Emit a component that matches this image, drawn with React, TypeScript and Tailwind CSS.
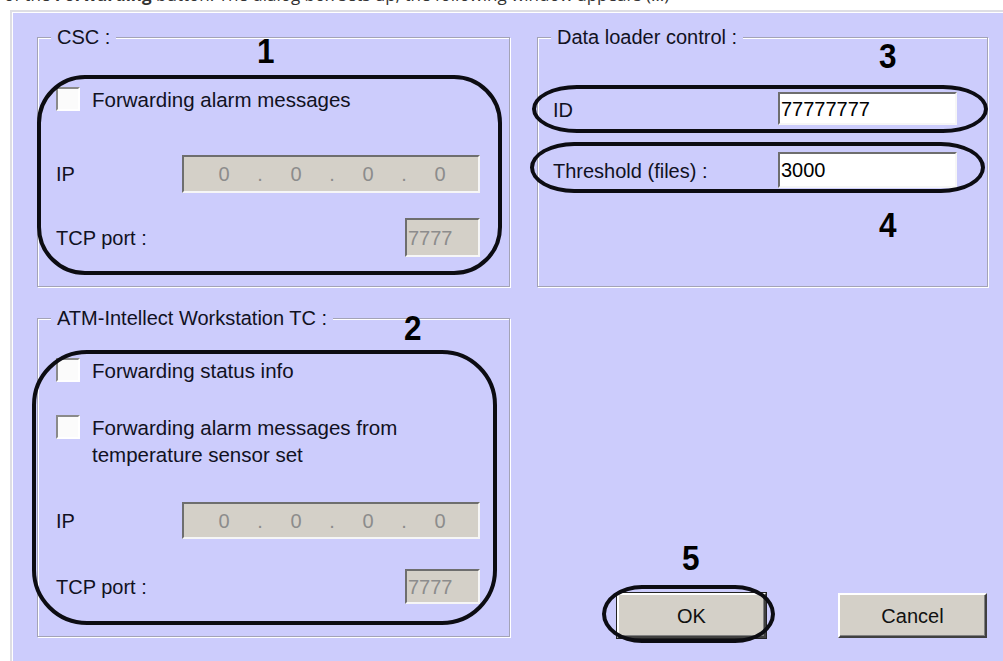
import React from 'react';

function GroupBox({
  title,
  className = '',
  children,
}: {
  title: string;
  className?: string;
  children?: React.ReactNode;
}) {
  return (
    <fieldset
      className={`min-w-0 border border-[#a3a3b6] shadow-[inset_1px_1px_0_#ffffff,1px_1px_0_#ffffff] ${className}`}
    >
      <legend className="ml-[13px] px-[6px] bg-[#ccccfc] text-[20px] leading-[20px]">
        {title}
      </legend>
      {children}
    </fieldset>
  );
}

function Checkbox({ label }: { label: React.ReactNode }) {
  return (
    <label className="flex items-start gap-[12px]">
      <span className="block size-[24px] shrink-0 bg-[#fbfbfb] border-2 border-t-[#8a8a8a] border-l-[#8a8a8a] border-b-white border-r-white" />
      <span className="text-[20.5px] leading-[27px] -mt-[1px]">{label}</span>
    </label>
  );
}

const sunken =
  'border-2 border-t-[#6e6e6e] border-l-[#6e6e6e] border-b-[#f6f6f6] border-r-[#f6f6f6]';

function IpField() {
  const parts = ['0', '0', '0', '0'];
  return (
    <div
      className={`w-[298px] h-full flex items-center bg-[#d4d0c8] pl-[10px] text-[20px] text-[#8c8c8c] ${sunken}`}
    >
      {parts.map((p, i) => (
        <React.Fragment key={i}>
          <span className="w-[60px] text-center">{p}</span>
          {i < 3 && <span className="w-[12px] text-center">.</span>}
        </React.Fragment>
      ))}
    </div>
  );
}

function PortField() {
  return (
    <div
      className={`w-[75px] h-full flex items-center bg-[#d4d0c8] pl-[1px] text-[20px] text-[#8c8c8c] ${sunken}`}
    >
      7777
    </div>
  );
}

function TextField({ value }: { value: string }) {
  return (
    <div
      className={`w-[179px] h-full flex items-center bg-white pl-[1px] text-[20px] text-black ${sunken}`}
    >
      {value}
    </div>
  );
}

function Button({ label, isDefault }: { label: string; isDefault?: boolean }) {
  return (
    <button
      className={`w-[149px] h-[45px] bg-[#d4d0c8] text-[20px] text-[#111] border-2 border-t-white border-l-white border-b-[#404040] border-r-[#404040] shadow-[inset_-1px_-1px_0_#808080] ${
        isDefault ? 'outline outline-1 outline-[#222]' : ''
      }`}
    >
      {label}
    </button>
  );
}

export default function App() {
  return (
    <div className="w-[1003px] h-[661px] overflow-hidden bg-white flex flex-col font-['Liberation_Sans',Arial,sans-serif] text-[#111122]">
      {/* cut-off line of the surrounding document */}
      <div className="h-[10px] shrink-0 overflow-hidden">
        <p className="-mt-[15px] pl-[4px] text-[17px] leading-[20px] text-[#333] whitespace-nowrap font-['Open_Sans',sans-serif]">
          of the <b>Forwarding</b> button. The dialog box sets up, the following window appears (…)
        </p>
      </div>

      <div className="relative flex-1 ml-[10px] bg-[#ccccfc] border-t-2 border-l-2 border-[#dedee4] shadow-[inset_1px_1px_0_#ffffff] pl-[25px] pt-[15px] pr-[15px] pb-[23px]">
        <div className="h-full grid grid-cols-[473px_451px] grid-rows-[auto_1fr] gap-x-[27px] gap-y-[21px]">
          <GroupBox title="CSC :">
            <div className="flex flex-col pl-[18px] pr-[29px] pb-[29px]">
              <div className="mt-[40px] h-[24px]">
                <Checkbox label="Forwarding alarm messages" />
              </div>
              <div className="mt-[44px] h-[38px] flex items-center justify-between">
                <span className="text-[20px]">IP</span>
                <IpField />
              </div>
              <div className="mt-[25px] h-[39px] flex items-center justify-between">
                <span className="text-[20px]">TCP port :</span>
                <PortField />
              </div>
            </div>
          </GroupBox>

          <GroupBox title="Data loader control :">
            <div className="flex flex-col pl-[15px] pr-[30px]">
              <div className="mt-[45px] h-[33px] flex items-center justify-between">
                <span className="text-[20px] mt-[3px]">ID</span>
                <TextField value="77777777" />
              </div>
              <div className="mt-[27px] h-[36px] flex items-center justify-between">
                <span className="text-[20px] mt-[2px]">Threshold (files) :</span>
                <TextField value="3000" />
              </div>
            </div>
          </GroupBox>

          <GroupBox title="ATM-Intellect Workstation TC :" className="self-start">
            <div className="flex flex-col pl-[18px] pr-[29px] pb-[32px]">
              <div className="mt-[30px]">
                <Checkbox label="Forwarding status info" />
              </div>
              <div className="mt-[31px]">
                <Checkbox
                  label={
                    <>
                      Forwarding alarm messages from
                      <br />
                      temperature sensor set
                    </>
                  }
                />
              </div>
              <div className="mt-[34px] h-[37px] flex items-center justify-between">
                <span className="text-[20px]">IP</span>
                <IpField />
              </div>
              <div className="mt-[30px] h-[35px] flex items-center justify-between">
                <span className="text-[20px]">TCP port :</span>
                <PortField />
              </div>
            </div>
          </GroupBox>

          <div className="self-end flex justify-end gap-[72px] pr-[1px]">
            <Button label="OK" isDefault />
            <Button label="Cancel" />
          </div>
        </div>

        {/* annotation marks drawn over the dialog */}
        <div className="pointer-events-none absolute left-[25px] top-[63px] w-[465px] h-[200px] rounded-[48px] border-[4px] border-[#0c0c12]" />
        <div className="pointer-events-none absolute left-[20px] top-[338px] w-[465px] h-[275px] rounded-[55px] border-[4px] border-[#0c0c12]" />
        <div className="pointer-events-none absolute left-[520px] top-[73px] w-[456px] h-[48px] rounded-[45px/24px] border-[4px] border-[#0c0c12]" />
        <div className="pointer-events-none absolute left-[518px] top-[130px] w-[455px] h-[51px] rounded-[45px/26px] border-[4px] border-[#0c0c12]" />
        <div className="pointer-events-none absolute left-[590px] top-[573px] w-[173px] h-[58px] rounded-[40px/29px] border-[4px] border-[#0c0c12]" />

        <span className="absolute left-[244px] top-[21px] text-[35px] leading-none font-bold text-black scale-x-90">1</span>
        <span className="absolute left-[391px] top-[298px] text-[35px] leading-none font-bold text-black scale-x-90">2</span>
        <span className="absolute left-[866px] top-[26px] text-[35px] leading-none font-bold text-black scale-x-90">3</span>
        <span className="absolute left-[866px] top-[195px] text-[35px] leading-none font-bold text-black scale-x-90">4</span>
        <span className="absolute left-[669px] top-[528px] text-[35px] leading-none font-bold text-black scale-x-90">5</span>
      </div>
    </div>
  );
}
